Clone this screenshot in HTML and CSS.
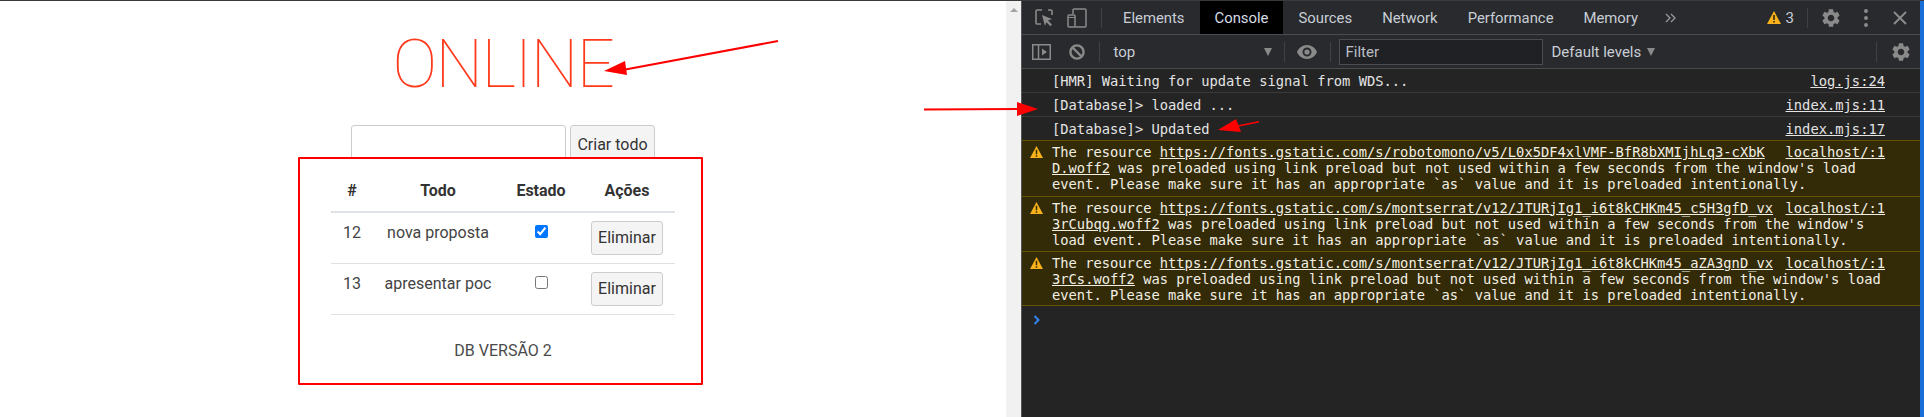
FILE: index.html
```html
<!DOCTYPE html>
<html lang="pt">
<head>
<meta charset="utf-8">
<title>Online</title>
<link rel="stylesheet" href="styles.css">
</head>
<body>
<div class="window">
  <main class="page">
    <h1 class="title">ONLINE</h1>
    <form class="todo-form">
      <input class="todo-input" type="text">
      <button class="btn" type="button">Criar todo</button>
    </form>
    <section class="highlight">
      <table class="todos">
        <thead>
          <tr><th class="c-id">#</th><th class="c-todo">Todo</th><th class="c-state">Estado</th><th class="c-act">Ações</th></tr>
        </thead>
        <tbody>
          <tr><td>12</td><td>nova proposta</td><td><input class="check" type="checkbox" checked></td><td><button class="btn" type="button">Eliminar</button></td></tr>
          <tr><td>13</td><td>apresentar poc</td><td><input class="check" type="checkbox"></td><td><button class="btn" type="button">Eliminar</button></td></tr>
        </tbody>
      </table>
      <p class="version">DB VERSÃO 2</p>
    </section>
  </main>
  <div class="scrollbar"><span class="scroll-up"></span></div>
  <aside class="devtools">
    <div class="tabbar">
      <div class="tools-left">
        <svg class="ico ico-inspect" width="18" height="18" viewBox="0 0 18 18"><path d="M7 1H2a1 1 0 0 0-1 1v12a1 1 0 0 0 1 1h4M13 1h3a1 1 0 0 1 1 1v4" fill="none" stroke="#8a8a8a" stroke-width="1.6"/><path d="M7 6l10 4-4 1.6 4 4-1.6 1.6-4-4L10 17z" fill="#8a8a8a"/></svg>
        <svg class="ico ico-device" width="20" height="20" viewBox="0 0 20 20"><path d="M6 6V2a1 1 0 0 1 1-1h11a1 1 0 0 1 1 1v16a1 1 0 0 1-1 1H8" fill="none" stroke="#8a8a8a" stroke-width="1.5"/><rect x="1" y="7" width="7" height="12" rx="1" fill="none" stroke="#8a8a8a" stroke-width="1.5"/><path d="M1 9.500h7" stroke="#8a8a8a" stroke-width="1"/></svg>
      </div>
      <span class="sep sep-tabs"></span>
      <nav class="tabs">
        <span class="tab">Elements</span>
        <span class="tab active">Console</span>
        <span class="tab">Sources</span>
        <span class="tab">Network</span>
        <span class="tab">Performance</span>
        <span class="tab">Memory</span>
      </nav>
      <svg class="ico ico-more" width="12" height="10" viewBox="0 0 12 10"><path d="M1 1l4 4-4 4M6 1l4 4-4 4" fill="none" stroke="#9a9a9a" stroke-width="1.3"/></svg>
      <div class="tools-right">
        <svg class="ico" width="14" height="13" viewBox="0 0 14 13"><path d="M7 0l7 13H0z" fill="#f9b21b"/><path d="M6.200 4h1.600v5H6.200zM6.200 10h1.600v1.600H6.200z" fill="#332a00"/></svg>
        <span class="count">3</span>
        <span class="sep sep-count"></span>
        <svg class="ico ico-gear" width="22" height="22" viewBox="0 0 24 24"><path fill="#8a8a8a" d="M19.14 12.94c.04-.3.06-.61.06-.94 0-.32-.02-.64-.07-.94l2.03-1.58a.49.49 0 0 0 .12-.61l-1.92-3.32a.488.488 0 0 0-.59-.22l-2.39.96c-.5-.38-1.03-.7-1.62-.94l-.36-2.54a.484.484 0 0 0-.48-.41h-3.84c-.24 0-.43.17-.47.41l-.36 2.54c-.59.24-1.13.57-1.62.94l-2.39-.96c-.22-.08-.47 0-.59.22L2.74 8.87c-.12.21-.08.47.12.61l2.03 1.58c-.05.3-.09.63-.09.94s.02.64.07.94l-2.03 1.58a.49.49 0 0 0-.12.61l1.92 3.32c.12.22.37.29.59.22l2.39-.96c.5.38 1.03.7 1.62.94l.36 2.54c.05.24.24.41.48.41h3.84c.24 0 .44-.17.47-.41l.36-2.54c.59-.24 1.13-.56 1.62-.94l2.39.96c.22.08.47 0 .59-.22l1.92-3.32c.12-.22.07-.47-.12-.61l-2.01-1.58zM12 15.600c-1.980 0-3.600-1.620-3.600-3.600s1.620-3.600 3.600-3.600 3.600 1.620 3.600 3.600-1.620 3.600-3.600 3.600z"/></svg>
        <svg class="ico ico-dots" width="4" height="18" viewBox="0 0 4 18"><circle cx="2" cy="2" r="2" fill="#8a8a8a"/><circle cx="2" cy="9" r="2" fill="#8a8a8a"/><circle cx="2" cy="16" r="2" fill="#8a8a8a"/></svg>
        <svg class="ico ico-close" width="14" height="14" viewBox="0 0 14 14"><path d="M1 1l12 12M13 1L1 13" stroke="#8a8a8a" stroke-width="2"/></svg>
      </div>
    </div>
    <div class="toolbar">
      <svg class="ico ico-sidebar" width="19" height="16" viewBox="0 0 19 16"><rect x=".75" y=".75" width="17.5" height="14.5" fill="none" stroke="#8a8a8a" stroke-width="1.5"/><path d="M6.500 1v14" stroke="#8a8a8a" stroke-width="1.5"/><path d="M10 4.500l5 3.500-5 3.500z" fill="#8a8a8a"/></svg>
      <svg class="ico ico-block" width="16" height="16" viewBox="0 0 16 16"><circle cx="8" cy="8" r="6.600" fill="none" stroke="#8a8a8a" stroke-width="2.400"/><path d="M3.500 3.500l9 9" stroke="#8a8a8a" stroke-width="2.400"/></svg>
      <span class="sep sep-ctx"></span>
      <span class="context">top</span>
      <span class="caret caret-ctx"></span>
      <span class="sep sep-eye"></span>
      <svg class="ico ico-eye" width="20" height="14" viewBox="0 0 20 14"><path fill="#8a8a8a" fill-rule="evenodd" d="M10 0c4.500 0 8.400 2.900 10 7-1.600 4.100-5.500 7-10 7S1.600 11.100 0 7c1.600-4.100 5.500-7 10-7zm0 2.500a4.500 4.500 0 1 0 0 9 4.500 4.500 0 0 0 0-9zm0 1.900a2.600 2.600 0 1 1 0 5.200 2.600 2.600 0 0 1 0-5.200z"/></svg>
      <span class="sep sep-filter"></span>
      <span class="filter">Filter</span>
      <span class="levels">Default levels</span>
      <span class="caret caret-levels"></span>
      <span class="sep sep-gear"></span>
      <svg class="ico ico-gear2" width="22" height="22" viewBox="0 0 24 24"><path fill="#8a8a8a" d="M19.14 12.94c.04-.3.06-.61.06-.94 0-.32-.02-.64-.07-.94l2.03-1.58a.49.49 0 0 0 .12-.61l-1.92-3.32a.488.488 0 0 0-.59-.22l-2.39.96c-.5-.38-1.03-.7-1.62-.94l-.36-2.54a.484.484 0 0 0-.48-.41h-3.84c-.24 0-.43.17-.47.41l-.36 2.54c-.59.24-1.13.57-1.62.94l-2.39-.96c-.22-.08-.47 0-.59.22L2.74 8.87c-.12.21-.08.47.12.61l2.03 1.58c-.05.3-.09.63-.09.94s.02.64.07.94l-2.03 1.58a.49.49 0 0 0-.12.61l1.92 3.32c.12.22.37.29.59.22l2.39-.96c.5.38 1.03.7 1.62.94l.36 2.54c.05.24.24.41.48.41h3.84c.24 0 .44-.17.47-.41l.36-2.54c.59-.24 1.13-.56 1.62-.94l2.39.96c.22.08.47 0 .59-.22l1.92-3.32c.12-.22.07-.47-.12-.61l-2.01-1.58zM12 15.600c-1.980 0-3.600-1.620-3.600-3.600s1.620-3.600 3.600-3.600 3.600 1.620 3.600 3.600-1.620 3.600-3.600 3.600z"/></svg>
    </div>
    <div class="console">
      <div class="row"><a class="src">log.js:24</a>[HMR] Waiting for update signal from WDS...</div>
      <div class="row"><a class="src">index.mjs:11</a>[Database]&gt; loaded ...</div>
      <div class="row"><a class="src">index.mjs:17</a>[Database]&gt; Updated</div>
      <div class="warn">
        <svg class="warn-ico" width="13" height="12" viewBox="0 0 14 13"><path d="M7 0l7 13H0z" fill="#f9b21b"/><path d="M6.200 4h1.600v5H6.200zM6.200 10h1.600v1.600H6.200z" fill="#332a00"/></svg>
        <div class="msg"><a class="src">localhost/:1</a>The resource <a class="url">https://fonts.gstatic.com/s/robotomono/v5/L0x5DF4xlVMF-BfR8bXMIjhLq3-cXbK</a><br><a class="url">D.woff2</a> was preloaded using link preload but not used within a few seconds from the window's load<br>event. Please make sure it has an appropriate `as` value and it is preloaded intentionally.</div>
      </div>
      <div class="warn">
        <svg class="warn-ico" width="13" height="12" viewBox="0 0 14 13"><path d="M7 0l7 13H0z" fill="#f9b21b"/><path d="M6.200 4h1.600v5H6.200zM6.200 10h1.600v1.600H6.200z" fill="#332a00"/></svg>
        <div class="msg"><a class="src">localhost/:1</a>The resource <a class="url">https://fonts.gstatic.com/s/montserrat/v12/JTURjIg1_i6t8kCHKm45_c5H3gfD_vx</a><br><a class="url">3rCubqg.woff2</a> was preloaded using link preload but not used within a few seconds from the window's<br>load event. Please make sure it has an appropriate `as` value and it is preloaded intentionally.</div>
      </div>
      <div class="warn warn-last">
        <svg class="warn-ico" width="13" height="12" viewBox="0 0 14 13"><path d="M7 0l7 13H0z" fill="#f9b21b"/><path d="M6.200 4h1.600v5H6.200zM6.200 10h1.600v1.600H6.200z" fill="#332a00"/></svg>
        <div class="msg"><a class="src">localhost/:1</a>The resource <a class="url">https://fonts.gstatic.com/s/montserrat/v12/JTURjIg1_i6t8kCHKm45_aZA3gnD_vx</a><br><a class="url">3rCs.woff2</a> was preloaded using link preload but not used within a few seconds from the window's load<br>event. Please make sure it has an appropriate `as` value and it is preloaded intentionally.</div>
      </div>
      <svg class="prompt" width="8" height="10" viewBox="0 0 8 10"><path d="M1.500 1l4 4-4 4" fill="none" stroke="#2f86f0" stroke-width="2"/></svg>
    </div>
  </aside>
  <div class="edge"></div>
  <svg class="arrows" width="1924" height="417" viewBox="0 0 1924 417">
    <path d="M778 41L620 70.500" stroke="#f00" stroke-width="2" fill="none"/>
    <path d="M604 71L625 61L627 75z" fill="#f00"/>
    <path d="M924 109.500L1020 109" stroke="#f00" stroke-width="2" fill="none"/>
    <path d="M1038 109L1017 102L1017 116z" fill="#f00"/>
    <path d="M1259 121.700L1238 126" stroke="#f00" stroke-width="1.600" fill="none"/>
    <path d="M1218 130L1236 119L1241 132z" fill="#f00"/>
  </svg>
</div>
</body>
</html>
```
FILE: styles.css
```css
* { box-sizing: border-box; }
html, body { margin: 0; padding: 0; background: #fff; }
.window {
  position: relative;
  display: flex;
  width: 1924px;
  height: 417px;
  overflow: hidden;
  border-top: 1px solid #3a3a3a;
  font-family: Roboto, "Liberation Sans", sans-serif;
}

/* page */
.page { width: 1006px; flex: none; background: #fff; color: #333; font-size: 16px; line-height: 24px; }
.title {
  margin: 0;
  padding-top: 29px;
  height: 124px;
  text-align: center;
  font-family: Roboto, sans-serif;
  font-weight: 100;
  font-size: 67px;
  line-height: 68px;
  letter-spacing: -1.400px;
  color: #ff3a1c;
}
.todo-form { display: flex; justify-content: center; gap: 4px; height: 32px; overflow: hidden; }
.todo-input { width: 215px; height: 40px; flex: none; border: 1px solid #ccc; border-radius: 3px; background: #fff; }
.btn {
  height: 34px;
  padding: 4px 6.500px;
  flex: none;
  border: 1px solid #ccc;
  border-radius: 3px;
  background: #f4f4f4;
  color: #333;
  font: 16px/24px Roboto, sans-serif;
}
.todo-form .btn { height: 40px; }
.highlight {
  width: 405px;
  height: 228px;
  margin-left: 298px;
  padding: 12px 26px 0 31px;
  border: 2px solid #f00;
  border-radius: 1px;
  background: #fff;
}
.todos { width: 344px; border-collapse: collapse; table-layout: fixed; }
.todos th { padding: 8px 0; font-weight: 700; text-align: center; border-bottom: 2px solid #dee2e6; }
.todos td { padding: 8px 0; text-align: center; vertical-align: top; color: #444; border-bottom: 1px solid #dee2e6; }
.c-id { width: 42px; }
.c-todo { width: 130px; }
.c-state { width: 76px; }
.c-act { width: 96px; }
.check { display: block; width: 13px; height: 13px; margin: 4px auto 0; }
.version { width: 344px; margin: 24px 0 0; text-align: center; color: #4a4a4a; }

/* scrollbar */
.scrollbar { width: 15px; flex: none; background: #f1f1f1; display: flex; justify-content: center; padding-top: 7px; }
.scroll-up { width: 0; height: 0; border: 4px solid transparent; border-top: 0; border-bottom: 4px solid #a3a3a3; }

/* devtools */
.devtools { width: 899px; flex: none; border-left: 1px solid #555; background: #242424; color: #e8eaed; display: flex; flex-direction: column; }
.edge { width: 4px; flex: none; background: #1a6ed8; }
.tabbar, .toolbar { display: flex; align-items: center; flex: none; background: #292a2d; border-bottom: 1px solid #494c50; height: 34px; }
.ico { display: block; flex: none; }
.tools-left { display: flex; align-items: center; padding-left: 13px; }
.ico-device { margin-left: 14px; }
.sep { display: block; width: 1px; height: 20px; flex: none; background: #3f4245; }
.sep-tabs { margin-left: 14px; margin-right: 6px; }
.tabs { display: flex; align-self: stretch; }
.tab { display: flex; align-items: center; padding: 0 15px; font-size: 14.850px; color: #c8ced6; }
.tab.active { background: #000; color: #d6dde6; }
.ico-more { margin-left: 12px; }
.tools-right { display: flex; align-items: center; margin-left: auto; padding-right: 13px; }
.count { margin-left: 5px; font-size: 15px; color: #c8ced6; }
.sep-count { margin-left: 13px; }
.ico-gear { margin-left: 12px; }
.ico-dots { margin-left: 22px; }
.ico-close { margin-left: 25px; }

.ico-sidebar { margin-left: 10px; }
.ico-block { margin-left: 18px; }
.sep-ctx { margin-left: 14px; }
.context { margin-left: 13.500px; width: 150px; font-size: 15px; color: #c8ced6; }
.caret { display: block; width: 0; height: 0; border-left: 4px solid transparent; border-right: 4px solid transparent; border-top: 8px solid #8a8a8a; }
.sep-eye { margin-left: 12px; }
.ico-eye { margin-left: 12px; }
.sep-filter { margin-left: 13px; }
.filter { margin-left: 8px; width: 204px; height: 26px; padding-left: 6px; border: 1px solid #4a4c50; background: #202124; font-size: 15px; line-height: 24px; color: #b9bec5; }
.levels { margin-left: 9px; font-size: 15px; color: #c8ced6; }
.caret-levels { margin-left: 6px; }
.sep-gear { margin-left: auto; }
.ico-gear2 { margin-left: 13px; margin-right: 8px; }

.console { flex: 1; font-family: "DejaVu Sans Mono", monospace; font-size: 13.780px; line-height: 16px; color: #e3e3e3; }
.row { height: 24px; padding: 4px 35px 0 30px; border-bottom: 1px solid #3a3a3a; white-space: pre; }
.row:nth-child(3) { height: 23px; border-bottom: 0; }
.src { float: right; text-decoration: underline; color: #e3e3e3; }
.warn {
  position: relative;
  height: 55.500px;
  padding: 3px 35px 0 30px;
  border-top: 1px solid #665500;
  background: #332a08;
  color: #f1efe4;
}
.warn-last { height: 55px; border-bottom: 1px solid #665500; }
.msg { white-space: pre; }
.warn .src { color: #f1efe4; }
.url { text-decoration: underline; }
.warn-ico { position: absolute; left: 8px; top: 5px; }
.prompt { display: block; margin: 9px 0 0 11px; }

/* annotation arrows drawn over the screenshot */
.arrows { position: absolute; left: 0; top: -1px; pointer-events: none; }
```
